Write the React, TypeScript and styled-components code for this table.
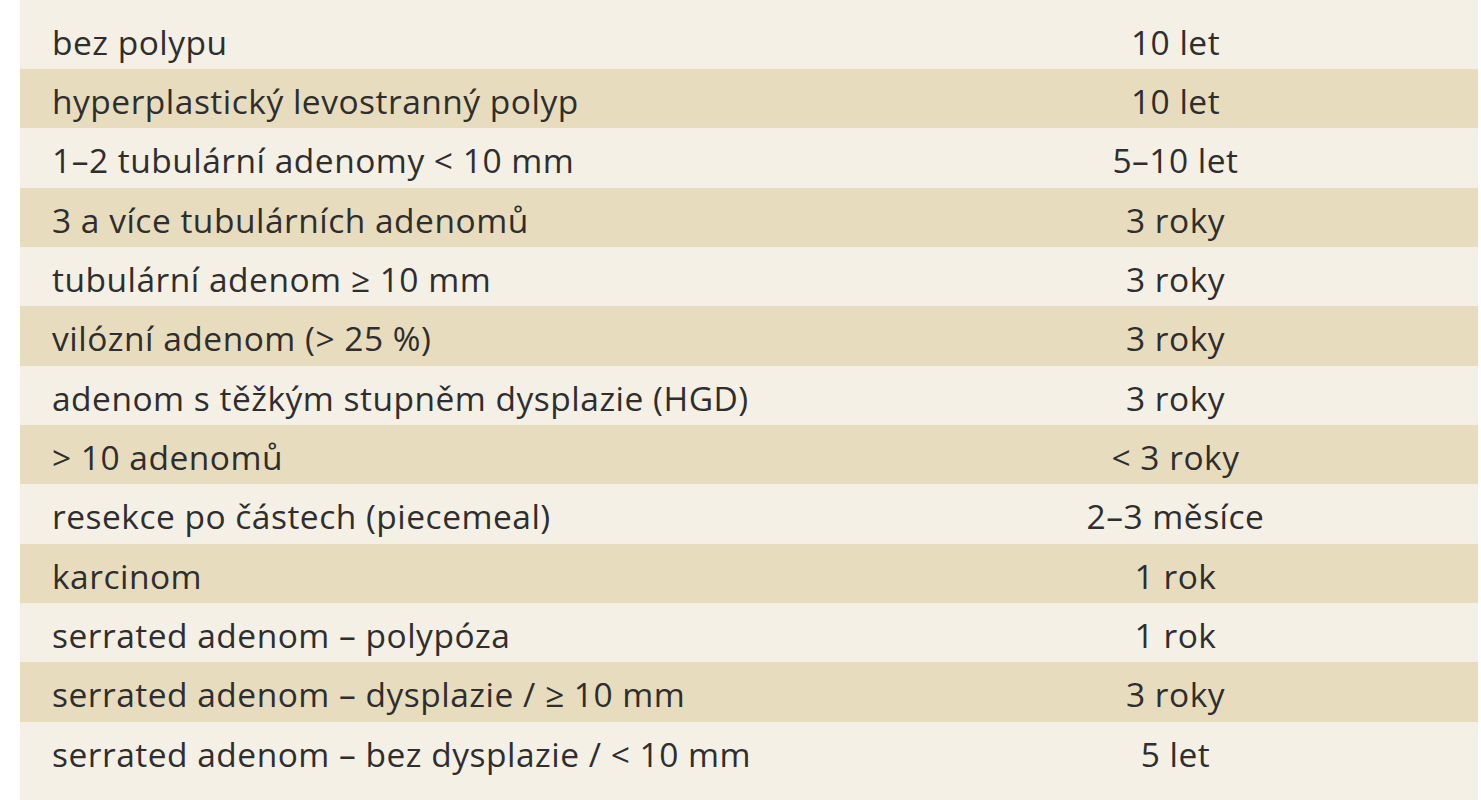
import React from "react";
import styled, { createGlobalStyle } from "styled-components";

const Global = createGlobalStyle`
  html, body { margin: 0; padding: 0; background: #ffffff; }
  body { font-family: "Open Sans", "Noto Sans", sans-serif; }
`;

const Page = styled.div`
  padding: 0 3px 0 20px;
`;

const Table = styled.div`
  background: #f5f0e5;
  padding: 9.67px 0 20px 0;
  display: flex;
  flex-direction: column;
`;

const Row = styled.div<{ $alt: boolean }>`
  display: grid;
  grid-template-columns: 853px 1fr;
  height: 59.33px;
  align-items: center;
  background: ${(p) => (p.$alt ? "#e8dcbe" : "transparent")};
  color: #2e2e2e;
  font-size: 33.5px;
  letter-spacing: 0.5px;
`;

const Label = styled.div`
  padding-left: 32px;
  padding-top: 5px;
  white-space: nowrap;
`;

const Value = styled.div`
  text-align: center;
  padding-top: 5px;
  white-space: nowrap;
`;

const rows: [string, string][] = [
  ["bez polypu", "10 let"],
  ["hyperplastický levostranný polyp", "10 let"],
  ["1–2 tubulární adenomy < 10 mm", "5–10 let"],
  ["3 a více tubulárních adenomů", "3 roky"],
  ["tubulární adenom ≥ 10 mm", "3 roky"],
  ["vilózní adenom (> 25 %)", "3 roky"],
  ["adenom s těžkým stupněm dysplazie (HGD)", "3 roky"],
  ["> 10 adenomů", "< 3 roky"],
  ["resekce po částech (piecemeal)", "2–3 měsíce"],
  ["karcinom", "1 rok"],
  ["serrated adenom – polypóza", "1 rok"],
  ["serrated adenom – dysplazie / ≥ 10 mm", "3 roky"],
  ["serrated adenom – bez dysplazie / < 10 mm", "5 let"],
];

export default function App() {
  return (
    <>
      <Global />
      <Page>
        <Table>
          {rows.map(([a, b], i) => (
            <Row key={i} $alt={i % 2 === 1}>
              <Label>{a}</Label>
              <Value>{b}</Value>
            </Row>
          ))}
        </Table>
      </Page>
    </>
  );
}
